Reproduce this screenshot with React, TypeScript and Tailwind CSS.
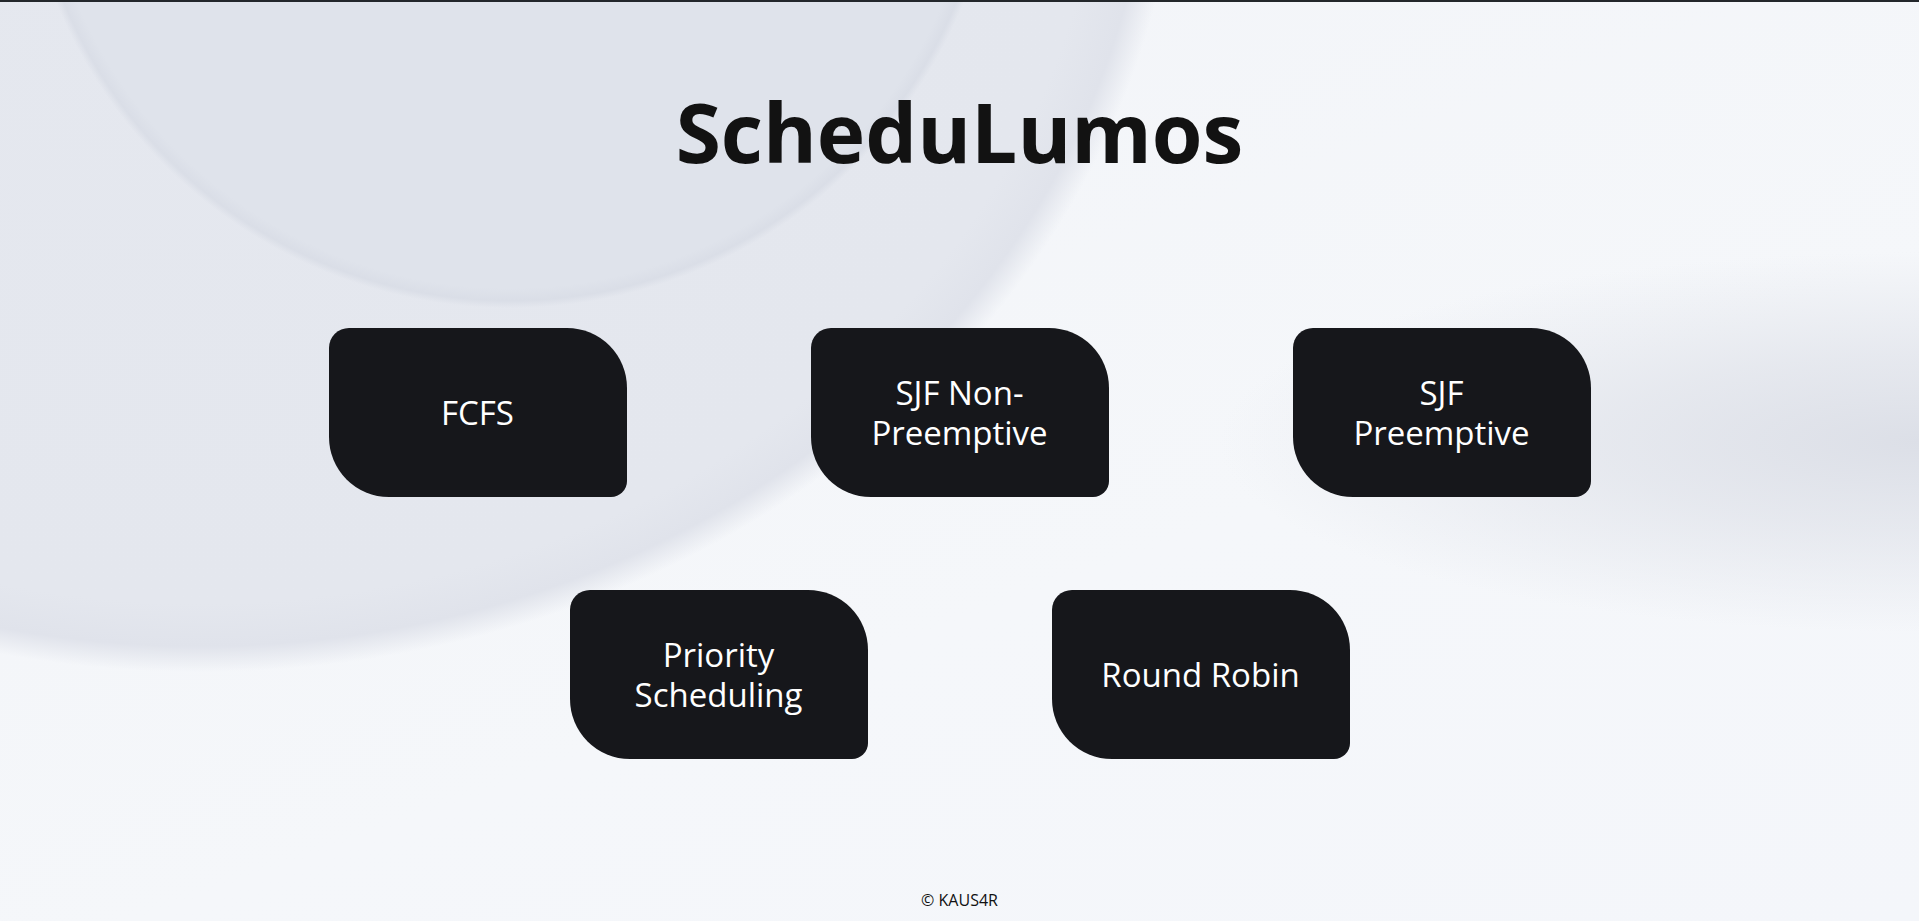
const algorithms = [
  'FCFS',
  'SJF Non-Preemptive',
  'SJF Preemptive',
  'Priority Scheduling',
  'Round Robin',
];

export default function App() {
  return (
    <div
      className="min-h-screen h-[921px] flex flex-col overflow-hidden border-t-2 border-[#23272b] bg-[#f4f6fa] bg-[radial-gradient(circle_490px_at_510px_-184px,#dfe3eb_0%,#dfe3eb_96%,#dadee7_98.5%,rgba(223,227,235,0)_100%),radial-gradient(ellipse_980px_860px_at_200px_-190px,#e5e8ef_0%,#e4e7ee_92%,#e0e3eb_97%,rgba(226,230,238,0)_100%),radial-gradient(ellipse_700px_190px_at_1919px_440px,#dcdfe7_0%,rgba(220,223,231,0.6)_45%,rgba(220,223,231,0)_100%),linear-gradient(160deg,#f2f4f8_0%,#f5f7fa_60%,#f4f6fa_100%)]"
      style={{ fontFamily: '"Open Sans", "Noto Sans", sans-serif' }}
    >
      {/* Title */}
      <h1 className="mt-[88px] text-center text-[82px] leading-none font-bold text-[#121212]">
        ScheduLumos
      </h1>

      {/* Algorithm cards */}
      <div className="mt-[156px] mx-auto w-[1262px] flex flex-wrap justify-center gap-x-[184px] gap-y-[93px]">
        {algorithms.map((name) => (
          <button
            key={name}
            className="w-[298px] h-[169px] px-[39px] flex items-center justify-center text-center bg-[#16171b] text-white text-[33px] leading-[40px] rounded-tl-[20px] rounded-tr-[60px] rounded-bl-[60px] rounded-br-[16px] cursor-pointer"
          >
            {name}
          </button>
        ))}
      </div>

      {/* Footer */}
      <footer className="mt-auto pb-[9px] text-center text-[16px] leading-6 text-[#111]">
        © KAUS4R
      </footer>
    </div>
  );
}
